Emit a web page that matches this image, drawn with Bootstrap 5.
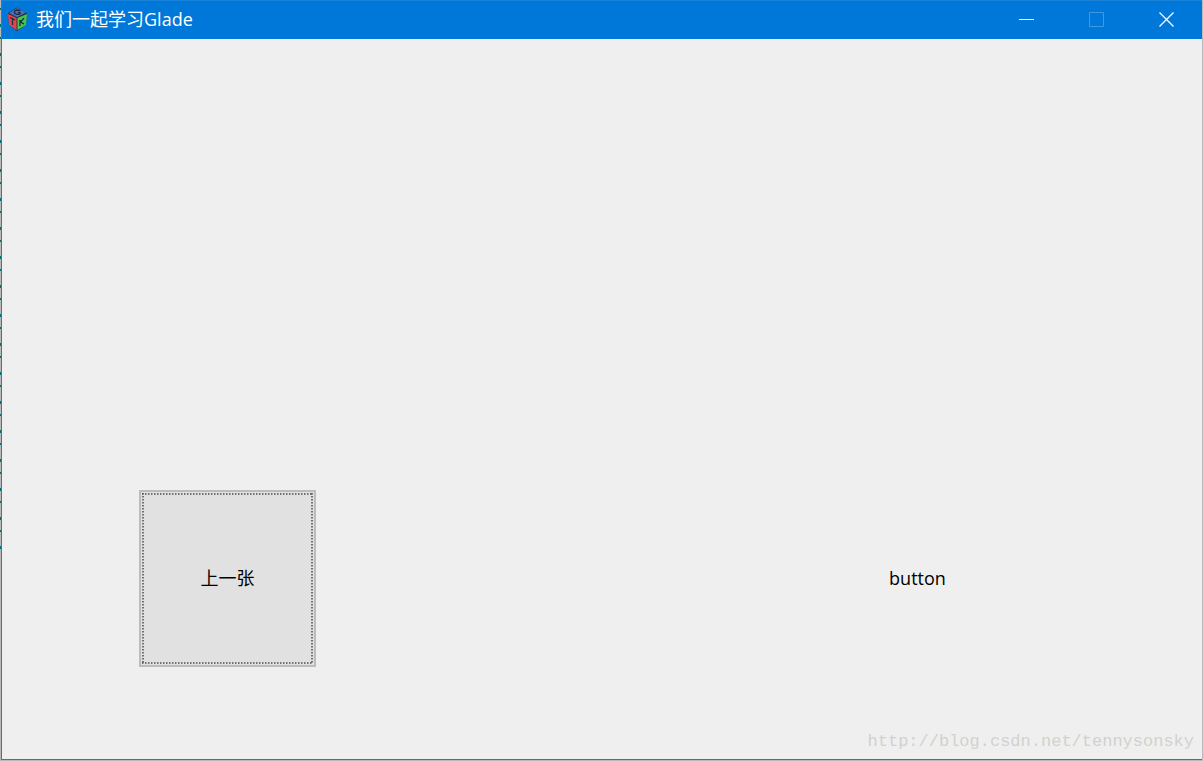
<!DOCTYPE html>
<html lang="zh-CN">
<head>
<meta charset="utf-8">
<meta name="viewport" content="width=device-width, initial-scale=1">
<title>我们一起学习Glade</title>
<link href="https://cdn.jsdelivr.net/npm/bootstrap@5.3.0/dist/css/bootstrap.min.css" rel="stylesheet">
<style>
  body {
    font-family: "Open Sans", "Noto Sans CJK SC", sans-serif;
    font-size: 18px;
    line-height: 24px;
    color: #000;
    background: #b9b9b9;
  }
  /* sliver of the desktop behind the window */
  .desk-edge {
    padding: 0 1px 1px;
    background: linear-gradient(90deg, transparent 1px, #b9b9b9 1px),
      linear-gradient(transparent 550px, #b9b9b9 550px),
      repeating-linear-gradient(#b9b9b9 0 8px, #007070 8px 10px, #b9b9b9 10px 24px, #007070 24px 27px, #b9b9b9 27px 29px);
  }
  .app-window {
    background: #efefef;
    border-left: 1px solid #1e7fcb;
    border-bottom: 1px solid #1e7fcb;
  }
  .title-bar { background: #0078d9; border-top: 1px solid #1a84da; height: 39px; padding: 0 0 2px 3px; }
  .title-text { margin-left: 7px; }
  .caption-btn { width: 70px; height: 36px; }
  .caption-btn:disabled { opacity: .25; }
  .stage { padding: 0 196px 92px 137px; }
  .gtk-btn {
    width: 177px; height: 177px; padding: 0 0 2px;
    border: 2px solid transparent; background: transparent; color: #000;
  }
  .gtk-focused { background: #e1e1e1; border-color: #bcbcbc; }
  .focus-svg { inset: 0; }
  .watermark { right: 8px; bottom: 5px; font-family: "Liberation Mono", monospace; font-size: 17px; color: #d2d2cc; }
</style>
<script defer src="https://cdn.jsdelivr.net/npm/bootstrap@5.3.0/dist/js/bootstrap.bundle.min.js"></script>
</head>
<body>
<div class="desk-edge vh-100 d-flex">
  <div class="app-window position-relative flex-grow-1 d-flex flex-column">
    <header class="title-bar d-flex align-items-center text-white">
      <svg width="24" height="26" viewBox="0 0 24 26" aria-hidden="true">
        <path d="M12 1.500L22 7L21 19L12 25L4 19L3 7Z" fill="#2a3444"/>
        <path d="M4 7L12.500 2L21 6.500L12 11Z" fill="#4a70c8"/>
        <path d="M3 8L11.500 12V24L4 19Z" fill="#e8424c"/>
        <path d="M22 8L12.500 12V24L21 19Z" fill="#40c850"/>
        <path d="M15.500 4.500C11 3 8 5.500 10 7.500C12 9 16 8.500 15 6.500H13M5 11.500L10 14M7.500 13V19M15 14V20M19 12L15.500 16L19 18" fill="none" stroke="#202a38" stroke-width="1.3"/>
      </svg>
      <span class="title-text">我们一起学习Glade</span>
      <div class="d-flex ms-auto">
        <button type="button" class="caption-btn btn p-0 border-0 rounded-0 text-white d-flex align-items-center justify-content-center" aria-label="Minimize">
          <svg width="16" height="16" viewBox="0 0 16 16"><path d="M0 8.5H15" stroke="currentColor"/></svg>
        </button>
        <button type="button" class="caption-btn btn p-0 border-0 rounded-0 text-white d-flex align-items-center justify-content-center" aria-label="Maximize" disabled>
          <svg width="16" height="16" viewBox="0 0 16 16"><path d="M.5 1.5H14.5V15.5H.5Z" fill="none" stroke="currentColor"/></svg>
        </button>
        <button type="button" class="caption-btn btn p-0 border-0 rounded-0 text-white d-flex align-items-center justify-content-center" aria-label="Close">
          <svg width="16" height="16" viewBox="0 0 16 16"><path d="M.5 1.5L14.5 15.5M14.5 1.5L.5 15.5" fill="none" stroke="currentColor" stroke-width="1.3"/></svg>
        </button>
      </div>
    </header>
    <main class="stage flex-grow-1 d-flex align-items-end justify-content-between">
      <button type="button" class="gtk-btn gtk-focused position-relative">
        <svg class="focus-svg position-absolute w-100 h-100" viewBox="0 0 173 173" aria-hidden="true"><path d="M1 2H172M2 1V172M1 171H172M171 1V172" fill="none" stroke="#4c4c4c" stroke-width="1.5" stroke-dasharray="1.5 1.5"/></svg>
        上一张
      </button>
      <button type="button" class="gtk-btn">button</button>
    </main>
    <div class="watermark position-absolute">http://blog.csdn.net/tennysonsky</div>
  </div>
</div>
</body>
</html>
